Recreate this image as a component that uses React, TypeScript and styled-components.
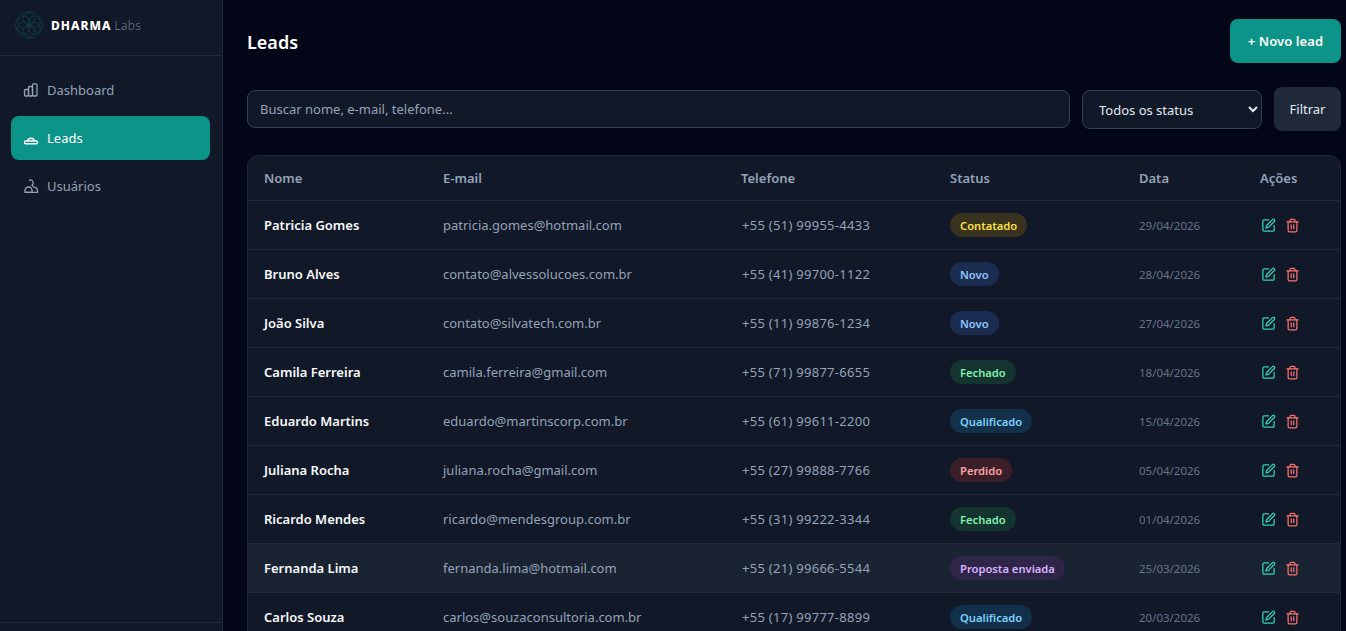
import React from "react";
import styled, { createGlobalStyle } from "styled-components";

const Global = createGlobalStyle`
  html, body { margin: 0; height: 100%; background: #020617; overflow: hidden; }
  body { font-family: "Noto Sans", "Open Sans", sans-serif; font-size: 13px; color: #e2e8f0; }
  * { box-sizing: border-box; }
`;
const Shell = styled.div`display: flex; height: 631px; overflow: hidden; background: #020617;`;
const Sidebar = styled.aside`width: 223px; flex: none; display: flex; flex-direction: column; background: #111827; border-right: 1px solid #1f2937;`;
const Brand = styled.div`height: 56px; display: flex; align-items: center; gap: 7px; padding: 0 0 6px 14px; border-bottom: 1px solid #1f2937;`;
const BrandName = styled.span`font-size: 12px; font-weight: 800; letter-spacing: 1px; color: #fff;`;
const BrandSuffix = styled.span`font-size: 12px; font-weight: 300; color: #738297; margin-left: 3px; letter-spacing: .35px;`;
const Nav = styled.nav`flex: 1; display: flex; flex-direction: column; gap: 4px; padding: 12px 12px 0 11px;`;
const NavItem = styled.a<{ $active?: boolean }>`
  height: 44px; display: flex; align-items: center; gap: 8px; padding-left: 12px; border-radius: 8px;
  font-size: 13px; background: ${p => p.$active ? "#0d9488" : "transparent"}; color: ${p => p.$active ? "#fff" : "#94a3b8"};
`;
const SideFooter = styled.div`height: 9px; flex: none; border-top: 1px solid #1f2937;`;
const Main = styled.main`flex: 1; min-width: 0; padding: 19px 5px 0 24px;`;
const Head = styled.header`display: flex; justify-content: space-between; align-items: center; margin-bottom: 24px;`;
const Title = styled.h1`margin: 0; padding-top: 2px; font-size: 18px; font-weight: 600; color: #fff;`;
const PrimaryButton = styled.button`width: 111px; height: 44px; border: 0; border-radius: 8px; background: #0d9488; color: #fff; letter-spacing: .1px; font: 600 13px "Noto Sans", sans-serif;`;
const Filters = styled.form`display: flex; align-items: center; gap: 12px; margin-bottom: 24px;`;
const Search = styled.input`
  flex: 1; min-width: 0; height: 38px; padding: 0 12px; border: 1px solid #334155; border-radius: 8px; background: #111827; color: #e2e8f0; font: 13px "Noto Sans", sans-serif;
  &::placeholder { color: #94a3b8; opacity: 1; }
`;
const Select = styled.select`width: 180px; height: 39px; padding: 2px 12px 0; border: 1px solid #334155; border-radius: 8px; background: #111827; color: #e2e8f0; font: 13px "Noto Sans", sans-serif;`;
const FilterButton = styled.button`width: 67px; height: 44px; border: 0; border-radius: 8px; background: #1f2937; color: #e2e8f0; font: 400 13px "Noto Sans", sans-serif;`;
const Card = styled.section`background: #111827; border: 1px solid #1f2937; border-radius: 12px 12px 0 0; overflow: hidden;`;
const Table = styled.table`width: 100%; border-collapse: collapse; table-layout: fixed;`;
const Th = styled.th`height: 44px; padding: 0 16px; text-align: left; font-size: 13px; font-weight: 600; color: #94a3b8; border-bottom: 1px solid #1f2937;`;
const Row = styled.tr<{ $hover?: boolean }>`height: 49px; background: ${p => p.$hover ? "#1a2332" : "transparent"}; border-bottom: 1px solid #1f2937;`;
const Td = styled.td`padding: 0 16px; font-size: 13px; color: #94a3b8; white-space: nowrap;`;
const PhoneCell = styled(Td)`padding-left: 17px; letter-spacing: .28px;`;
const NameCell = styled(Td)`font-weight: 600; color: #f8fafc;`;
const DateCell = styled(Td)`padding-top: 1px; font-size: 11.5px; color: #64748b;`;
const Badge = styled.span<{ $bg: string; $fg: string }>`display: inline-block; height: 24px; line-height: 25px; padding: 0 10px; border-radius: 12px; font-size: 11.2px; font-weight: 600; background: ${p => p.$bg}; color: ${p => p.$fg};`;
const Actions = styled.div`display: flex; align-items: center; gap: 9px; padding: 1px 0 0 1px;`;

const BarsIcon = () => <svg width="16" height="16" viewBox="0 0 16 16" fill="none" stroke="currentColor" strokeWidth="1.3"><rect x="1.500" y="7.500" width="4" height="6.500" rx="1"/><rect x="5.500" y="4.500" width="4" height="9.500" rx="1"/><rect x="9.500" y="1.800" width="4.500" height="12.200" rx="1"/></svg>;
const DomeIcon = () => <svg width="16" height="16" viewBox="0 0 16 16" fill="none" stroke="currentColor" strokeWidth="1.500"><path d="M4.800 11a3.200 2.800 0 0 1 6.400 0"/><rect x="1.500" y="11" width="13" height="2.800" rx="1.400"/></svg>;
const UserIcon = () => <svg width="16" height="16" viewBox="0 0 16 16" fill="none" stroke="currentColor" strokeWidth="1.300"><path d="M6 2.500a2.700 2.700 0 1 1 3 4.500"/><path d="M2 14.300v-1.800C2 10.600 3.600 9 5.500 9s3.500 1.600 3.500 3.500v1.800z"/><path d="M2 14.300h12.500V12.500c0-1.500-1.600-3-3.500-3.300L8.500 7"/></svg>;
const EditIcon = () => <svg width="15" height="15" viewBox="0 0 24 24" fill="none" stroke="#2dd4bf" strokeWidth="2" strokeLinecap="round" strokeLinejoin="round"><path d="M12 3H5a2 2 0 0 0-2 2v14a2 2 0 0 0 2 2h14a2 2 0 0 0 2-2v-7"/><path d="M18.400 2.600a2.100 2.100 0 0 1 3 3L12 15l-4 1 1-4z"/></svg>;
const TrashIcon = () => <svg width="15" height="15" viewBox="0 0 24 24" fill="none" stroke="#f87171" strokeWidth="2" strokeLinecap="round" strokeLinejoin="round"><path d="M3 6h18"/><path d="M19 6v14a2 2 0 0 1-2 2H7a2 2 0 0 1-2-2V6"/><path d="M8 6V4a2 2 0 0 1 2-2h4a2 2 0 0 1 2 2v2"/><path d="M10 11v6"/><path d="M14 11v6"/></svg>;
const Logo = () => <svg width="30" height="30" viewBox="0 0 30 30" fill="none" stroke="#0f3d3e" strokeWidth=".9"><circle cx="15" cy="15" r="13.500"/><circle cx="15" cy="9" r="6"/><circle cx="15" cy="21" r="6"/><circle cx="9.800" cy="12" r="6"/><circle cx="20.200" cy="12" r="6"/><circle cx="9.800" cy="18" r="6"/><circle cx="20.200" cy="18" r="6"/><circle cx="15" cy="15" r="1.500" fill="#0f3d3e"/></svg>;

const styles = {
  Contatado: ["#38321f", "#fde047"], Novo: ["#1a2d50", "#93c5fd"], Fechado: ["#14352f", "#86efac"],
  Qualificado: ["#13304a", "#7dd3fc"], Perdido: ["#3b1f28", "#fca5a5"], "Proposta enviada": ["#2f2549", "#d8b4fe"],
} as const;
type Status = keyof typeof styles;
const rows: [string, string, string, Status, string][] = [
  ["Patricia Gomes", "patricia.gomes@hotmail.com", "+55 (51) 99955-4433", "Contatado", "29/04/2026"],
  ["Bruno Alves", "contato@alvessolucoes.com.br", "+55 (41) 99700-1122", "Novo", "28/04/2026"],
  ["João Silva", "contato@silvatech.com.br", "+55 (11) 99876-1234", "Novo", "27/04/2026"],
  ["Camila Ferreira", "camila.ferreira@gmail.com", "+55 (71) 99877-6655", "Fechado", "18/04/2026"],
  ["Eduardo Martins", "eduardo@martinscorp.com.br", "+55 (61) 99611-2200", "Qualificado", "15/04/2026"],
  ["Juliana Rocha", "juliana.rocha@gmail.com", "+55 (27) 99888-7766", "Perdido", "05/04/2026"],
  ["Ricardo Mendes", "ricardo@mendesgroup.com.br", "+55 (31) 99222-3344", "Fechado", "01/04/2026"],
  ["Fernanda Lima", "fernanda.lima@hotmail.com", "+55 (21) 99666-5544", "Proposta enviada", "25/03/2026"],
  ["Carlos Souza", "carlos@souzaconsultoria.com.br", "+55 (17) 99777-8899", "Qualificado", "20/03/2026"],
];
const columns = [["Nome", 179], ["E-mail", 298], ["Telefone", 209], ["Status", 189], ["Data", 121], ["Ações", 96]] as const;

export default function App() {
  return <Shell><Global />
    <Sidebar>
      <Brand><Logo /><span><BrandName>DHARMA</BrandName><BrandSuffix>Labs</BrandSuffix></span></Brand>
      <Nav>
        <NavItem><BarsIcon />Dashboard</NavItem>
        <NavItem $active><DomeIcon />Leads</NavItem>
        <NavItem><UserIcon />Usuários</NavItem>
      </Nav>
      <SideFooter />
    </Sidebar>
    <Main>
      <Head><Title>Leads</Title><PrimaryButton>+ Novo lead</PrimaryButton></Head>
      <Filters>
        <Search placeholder="Buscar nome, e-mail, telefone..." />
        <Select><option>Todos os status</option></Select>
        <FilterButton type="button">Filtrar</FilterButton>
      </Filters>
      <Card><Table>
        <colgroup>{columns.map(([n, w]) => <col key={n} width={w} />)}</colgroup>
        <thead><tr>{columns.map(([n]) => <Th key={n}>{n}</Th>)}</tr></thead>
        <tbody>{rows.map(([name, mail, phone, status, date]) => <Row key={name} $hover={name === "Fernanda Lima"}>
          <NameCell>{name}</NameCell><Td>{mail}</Td><PhoneCell>{phone}</PhoneCell>
          <Td><Badge $bg={styles[status][0]} $fg={styles[status][1]}>{status}</Badge></Td>
          <DateCell>{date}</DateCell>
          <Td><Actions><EditIcon /><TrashIcon /></Actions></Td>
        </Row>)}</tbody>
      </Table></Card>
    </Main>
  </Shell>;
}
